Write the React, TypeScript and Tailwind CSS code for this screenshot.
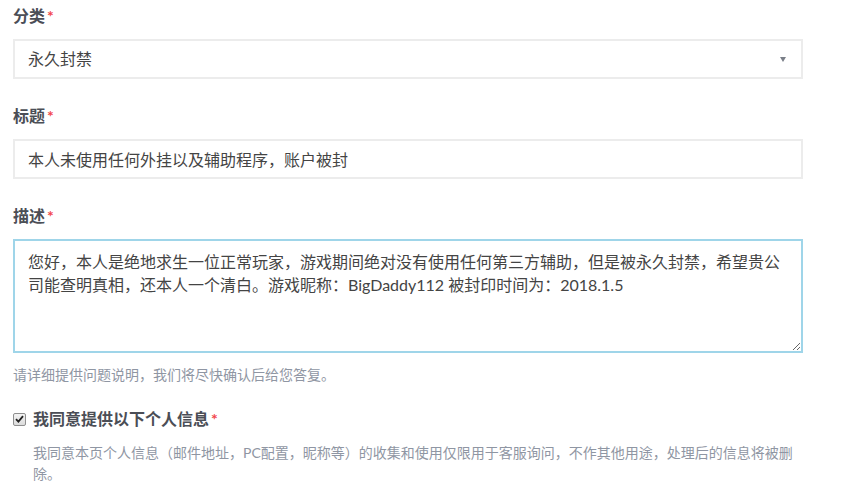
import React from "react"

const font = { fontFamily: "Lato, 'Noto Sans CJK SC', sans-serif" }

function Label({ children }: { children: React.ReactNode }) {
    return (
        <div className="text-[16px] leading-6 font-bold text-[#4b4e56] mb-[11px]">
            {children}
            <span className="text-[#f2474b] ml-0.5">*</span>
        </div>
    )
}

export default function App() {
    return (
        <div className="bg-white w-[851px] h-[493px] overflow-hidden" style={font}>
            <div className="w-[790px] ml-[13px] pt-1">
                {/* 分类 */}
                <div className="mb-[25px]">
                    <Label>分类</Label>
                    <div className="h-10 border-2 border-[#ececec] flex items-center justify-between pl-[13px] pr-[15px] text-[16px] text-[#444]">
                        <span>永久封禁</span>
                        <span className="w-0 h-0 border-l-[3.5px] border-r-[3.5px] border-t-[5px] border-l-transparent border-r-transparent border-t-[#7a7f88]" />
                    </div>
                </div>

                {/* 标题 */}
                <div className="mb-[25px]">
                    <Label>标题</Label>
                    <input
                        readOnly
                        value="本人未使用任何外挂以及辅助程序，账户被封"
                        className="w-full h-10 border-2 border-[#ececec] px-[13px] text-[16px] text-[#444] outline-none"
                        style={font}
                    />
                </div>

                {/* 描述 */}
                <div>
                    <Label>描述</Label>
                    <textarea
                        readOnly
                        defaultValue="您好，本人是绝地求生一位正常玩家，游戏期间绝对没有使用任何第三方辅助，但是被永久封禁，希望贵公司能查明真相，还本人一个清白。游戏昵称：BigDaddy112 被封印时间为：2018.1.5"
                        className="block w-full h-[114px] border-2 border-[#9fd5e9] px-[13px] py-[9px] text-[16px] leading-[23px] text-[#444] outline-none"
                        style={font}
                    />
                    <p className="mt-3 text-[14px] leading-5 text-[#8f96a3]">
                        请详细提供问题说明，我们将尽快确认后给您答复。
                    </p>
                </div>

                {/* 同意 */}
                <div className="mt-[22px]">
                    <div className="flex items-center h-6">
                        <span className="w-[13px] h-[13px] border border-[#8f8f8f] rounded-[2px] bg-gradient-to-b from-[#f4f4f4] to-[#dcdcdc] flex items-center justify-center">
                            <svg width="9" height="8" viewBox="0 0 9 8">
                                <path d="M1 4.2 L3.4 6.6 L8 1.2" fill="none" stroke="#222" strokeWidth="1.8" />
                            </svg>
                        </span>
                        <span className="ml-[7px] text-[16px] leading-6 font-bold text-[#4b4e56]">
                            我同意提供以下个人信息
                            <span className="text-[#f2474b] ml-0.5">*</span>
                        </span>
                    </div>
                    <p className="mt-[11px] ml-5 text-[14px] leading-[21px] text-[#8f96a3]">
                        我同意本页个人信息（邮件地址，PC配置，昵称等）的收集和使用仅限用于客服询问，不作其他用途，处理后的信息将被删除。
                    </p>
                </div>
            </div>
        </div>
    )
}
